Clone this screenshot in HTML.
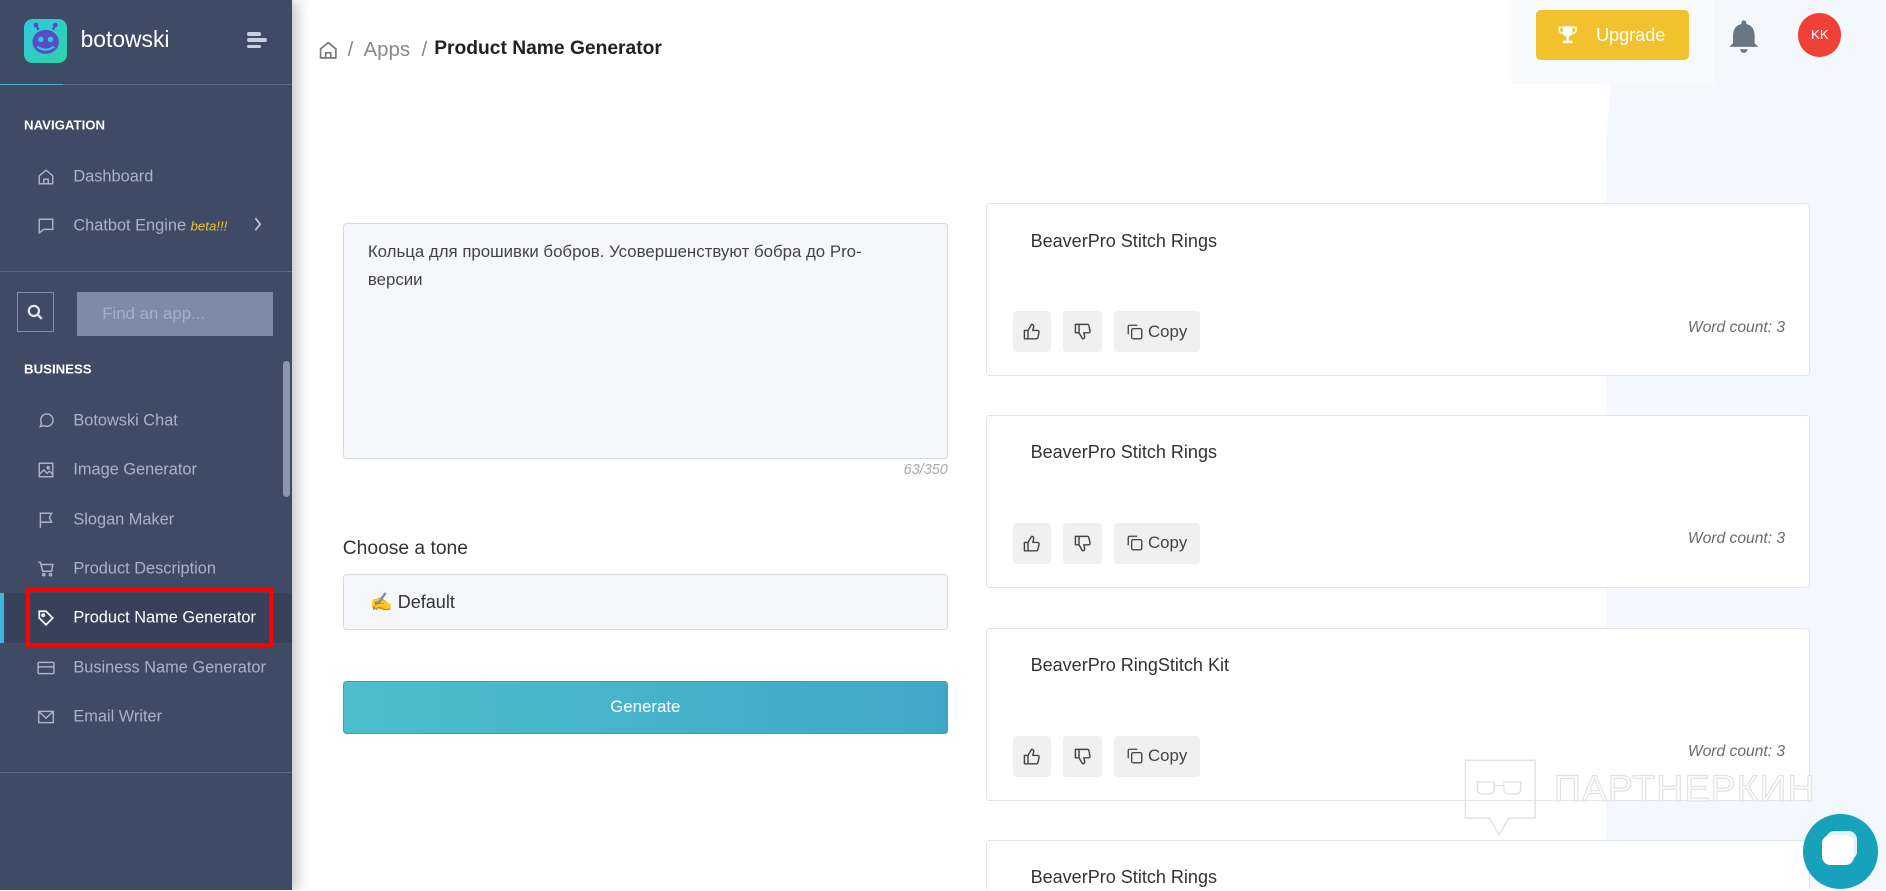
<!DOCTYPE html>
<html><head><meta charset="utf-8">
<style>
html,body{margin:0;padding:0;overflow:hidden;width:1886px;height:891px}
body{position:relative;background:#fff;font-family:"Liberation Sans","Noto Sans CJK SC",sans-serif}
#z{zoom:1.2028;width:1568px;height:740px;position:relative;overflow:hidden}
.a{position:absolute}
.sb{left:0;top:0;width:243px;height:741px;background:#3f4b64;box-shadow:4px 0 12px rgba(0,0,0,.25);z-index:2}
.nav{position:absolute;left:61px;font-size:13.6px;color:#a9b3c7;transform:translateY(-50%);white-space:nowrap}
.ic{position:absolute;left:31px;width:15px;height:15px;transform:translateY(-50%)}
.lbl{position:absolute;left:20px;font-size:11px;font-weight:bold;color:#fff;transform:translateY(-50%)}
.card{position:absolute;left:820px;width:685px;height:144px;background:#fff;border:1px solid #e2e5ea;border-radius:3px;box-sizing:border-box}
.card .t{position:absolute;left:36px;top:22px;font-size:15px;color:#333}
.btn{position:absolute;top:89px;height:34px;background:#f0f0f0;border-radius:3px;display:flex;align-items:center;justify-content:center;font-size:14px;color:#444}
.wc{position:absolute;right:20px;top:95px;font-size:13px;font-style:italic;color:#6b6b6b}
</style></head><body><div id="z">
<div class="a" style="left:1335px;top:-60px;width:400px;height:900px;background:#f4f7fb;border-top-left-radius:70px 200px"></div>
<div class="a" style="left:1256px;top:0;width:170px;height:70px;background:#f8fafc"></div>

<div class="a sb">
 <div class="a" style="left:20px;top:16px;width:36px;height:36px;border-radius:7px;background:linear-gradient(135deg,#2fc9e0,#2ed3a7)">
  <svg width="36" height="36" viewBox="0 0 36 36"><line x1="12" y1="9" x2="10" y2="5" stroke="#5a4bc7" stroke-width="2"/><line x1="24" y1="9" x2="26" y2="5" stroke="#5a4bc7" stroke-width="2"/><circle cx="10" cy="5" r="2" fill="#5a4bc7"/><circle cx="26" cy="5" r="2" fill="#5a4bc7"/><ellipse cx="18" cy="19" rx="11" ry="10" fill="#5a4bc7"/><circle cx="14" cy="17" r="2.3" fill="#2fc9e0"/><circle cx="22" cy="17" r="2.3" fill="#2fc9e0"/><path d="M11 23 Q18 28 25 23" stroke="#2fc9e0" stroke-width="1.8" fill="none"/></svg>
 </div>
 <div class="a" style="left:67px;top:22px;font-size:19px;color:#fff">botowski</div>
 <div class="a" style="left:205px;top:27px;width:12px;height:3px;background:#c7cfe0;border-radius:2px"></div>
 <div class="a" style="left:205px;top:32px;width:17px;height:3px;background:#c7cfe0;border-radius:2px"></div>
 <div class="a" style="left:205px;top:37px;width:12px;height:3px;background:#c7cfe0;border-radius:2px"></div>
 <div class="a" style="left:0;top:70px;width:243px;height:1px;background:#5a6780"></div>
 <div class="a" style="left:0;top:70px;width:52px;height:1px;background:#3fb6cc"></div>
 <div class="lbl" style="top:104px">NAVIGATION</div>
 <svg class="ic" style="top:147px" viewBox="0 0 16 16" fill="none" stroke="#a9b3c7" stroke-width="1.3"><path d="M2 7 8 2l6 5v7H2z M6 14v-4h4v4"/></svg>
 <div class="nav" style="top:147px">Dashboard</div>
 <svg class="ic" style="top:188px" viewBox="0 0 16 16" fill="none" stroke="#a9b3c7" stroke-width="1.3"><path d="M2 2h12v9H6l-4 3z"/></svg>
 <div class="nav" style="top:188px">Chatbot Engine <i style="font-size:11px;color:#f2c12e">beta!!!</i></div>
 <svg class="a" style="left:210px;top:180px" width="8" height="12" viewBox="0 0 8 12" fill="none" stroke="#c0c8d8" stroke-width="1.4"><path d="M2 1l4 5-4 5"/></svg>
 <div class="a" style="left:0;top:225px;width:243px;height:1px;background:#5a6780"></div>
 <div class="a" style="left:14px;top:243px;width:31px;height:33px;border:1px solid #8290ad;box-sizing:border-box"></div>
 <svg class="a" style="left:22px;top:252px" width="15" height="15" viewBox="0 0 16 16" fill="none" stroke="#dfe4ee" stroke-width="2"><circle cx="7" cy="7" r="4.5"/><path d="M10.5 10.5 14 14"/></svg>
 <div class="a" style="left:64px;top:243px;width:163px;height:36px;background:#7d8aa8;color:#a5b0c8;font-size:14px;line-height:36px;padding-left:21px;box-sizing:border-box">Find an app...</div>
 <div class="lbl" style="top:307px">BUSINESS</div>
 <div class="a" style="left:235px;top:300px;width:6px;height:113px;background:#8c96ad;border-radius:3px"></div>
 <svg class="ic" style="top:350px" viewBox="0 0 16 16" fill="none" stroke="#a9b3c7" stroke-width="1.3"><path d="M3 13l1-3a5.5 5.5 0 1 1 2 2z"/></svg>
 <div class="nav" style="top:350px">Botowski Chat</div>
 <svg class="ic" style="top:391px" viewBox="0 0 16 16" fill="none" stroke="#a9b3c7" stroke-width="1.3"><rect x="2" y="2" width="12" height="12"/><path d="M2 12l4-4 3 3 2-2 3 3"/><circle cx="10" cy="6" r="1"/></svg>
 <div class="nav" style="top:391px">Image Generator</div>
 <svg class="ic" style="top:432px" viewBox="0 0 16 16" fill="none" stroke="#a9b3c7" stroke-width="1.3"><path d="M3 15V2h10l-2 4 2 4H3"/></svg>
 <div class="nav" style="top:432px">Slogan Maker</div>
 <svg class="ic" style="top:473px" viewBox="0 0 16 16" fill="none" stroke="#a9b3c7" stroke-width="1.3"><path d="M1 2h2l2 8h8l1-6H4"/><circle cx="6" cy="13" r="1"/><circle cx="12" cy="13" r="1"/></svg>
 <div class="nav" style="top:473px">Product Description</div>
 <div class="a" style="left:0;top:493px;width:243px;height:42px;background:#37425a"></div>
 <div class="a" style="left:0;top:493px;width:3px;height:42px;background:#3fb6dc"></div>
 <svg class="ic" style="top:514px" viewBox="0 0 16 16" fill="none" stroke="#fff" stroke-width="1.5"><path d="M2 2h6l6 6-6 6-6-6z"/><circle cx="5.5" cy="5.5" r="1"/></svg>
 <div class="nav" style="top:514px;color:#fff">Product Name Generator</div>
 <div class="a" style="left:22px;top:489px;width:205px;height:49px;border:4px solid #f00;box-sizing:border-box"></div>
 <svg class="ic" style="top:555px" viewBox="0 0 16 16" fill="none" stroke="#a9b3c7" stroke-width="1.3"><rect x="1" y="3" width="14" height="10" rx="1"/><path d="M1 7h14"/></svg>
 <div class="nav" style="top:555px">Business Name Generator</div>
 <svg class="ic" style="top:596px" viewBox="0 0 16 16" fill="none" stroke="#a9b3c7" stroke-width="1.3"><rect x="1.5" y="3" width="13" height="10"/><path d="M1.5 3 8 9l6.5-6"/></svg>
 <div class="nav" style="top:596px">Email Writer</div>
 <div class="a" style="left:0;top:642px;width:243px;height:1px;background:#5a6780"></div>
</div>

<svg class="a" style="left:264px;top:33px" width="17" height="17" viewBox="0 0 16 16" fill="none" stroke="#777" stroke-width="1.3"><path d="M2 7 8 2l6 5v7H2z M6 14v-4h4v4"/></svg>
<div class="a" style="left:289px;top:32px;font-size:17px;color:#888">/&nbsp; Apps &nbsp;/</div>
<div class="a" style="left:361px;top:32px;font-size:16px;font-weight:bold;color:#222">Product Name Generator</div>

<div class="a" style="left:1277px;top:8px;width:127px;height:42px;background:#f2c12e;border-radius:4px;color:#fff;font-size:15px;line-height:42px">
<svg class="a" style="left:18px;top:13px" width="16" height="16" viewBox="0 0 16 16" fill="#fff"><path d="M4 1h8v5a4 4 0 0 1-8 0z"/><path d="M4 2H1v2a3 3 0 0 0 3 3M12 2h3v2a3 3 0 0 1-3 3" fill="none" stroke="#fff" stroke-width="1.3"/><rect x="7" y="9" width="2" height="4"/><rect x="4" y="13" width="8" height="2"/></svg>
<span style="position:absolute;left:50px">Upgrade</span></div>
<svg class="a" style="left:1436px;top:15px" width="28" height="30" viewBox="0 0 28 30"><path d="M14 2a2 2 0 0 1 2 2v1c5 1 7 5 7 10v6l3 3H2l3-3v-6c0-5 2-9 7-10V4a2 2 0 0 1 2-2z" fill="#6c7682"/><path d="M11 26a3 3 0 0 0 6 0z" fill="#6c7682"/></svg>
<div class="a" style="left:1495px;top:11px;width:36px;height:36px;border-radius:50%;background:#ef4136;color:#fff;font-size:11px;line-height:36px;text-align:center">KK</div>

<div class="a" style="left:285px;top:185px;width:503px;height:197px;background:#f5f7fa;border:1px solid #d5d9e0;border-radius:3px;box-sizing:border-box;padding:12px 50px 12px 20px;font-size:14px;line-height:23px;color:#444">Кольца для прошивки бобров. Усовершенствуют бобра до Pro-версии</div>
<div class="a" style="left:700px;top:384px;width:88px;text-align:right;font-size:12px;font-style:italic;color:#aaa">63/350</div>
<div class="a" style="left:285px;top:447px;font-size:16px;color:#333">Choose a tone</div>
<div class="a" style="left:285px;top:477px;width:503px;height:47px;background:#f5f7fa;border:1px solid #d5d9e0;border-radius:3px;box-sizing:border-box;padding-left:22px;line-height:45px;font-size:15px;color:#333">✍️ Default</div>
<div class="a" style="left:285px;top:566px;width:503px;height:44px;background:linear-gradient(90deg,#4dbecb,#3fa8c8);border:1px solid #3c9fb8;border-radius:3px;box-sizing:border-box;color:#fff;font-size:14px;text-align:center;line-height:42px">Generate</div>

<svg width="0" height="0" style="position:absolute"><defs>
<symbol id="up" viewBox="0 0 16 16"><path d="M2 7h3v7H2z M5 7l3-5c1.5 0 2 1 1.6 2.5L9 7h4a1.2 1.2 0 0 1 1.2 1.4l-1 4.6a1.3 1.3 0 0 1-1.3 1H5" fill="none" stroke="#444" stroke-width="1.2" stroke-linejoin="round"/></symbol>
<symbol id="cp" viewBox="0 0 16 16"><path d="M2 10V3a1 1 0 0 1 1-1h7" fill="none" stroke="#444" stroke-width="1.2"/><rect x="5" y="5" width="9" height="9" rx="1.5" fill="none" stroke="#444" stroke-width="1.2"/></symbol>
</defs></svg>

<div class="card" style="top:169px"><div class="t">BeaverPro Stitch Rings</div><div class="btn" style="left:21px;width:32px"><svg width="16" height="16"><use href="#up"/></svg></div><div class="btn" style="left:63px;width:32px"><svg width="16" height="16" style="transform:rotate(180deg) scaleX(-1)"><use href="#up"/></svg></div><div class="btn" style="left:105px;width:72px"><svg width="15" height="15" style="margin-right:3px"><use href="#cp"/></svg>Copy</div><div class="wc">Word count: 3</div></div>
<div class="card" style="top:345px"><div class="t">BeaverPro Stitch Rings</div><div class="btn" style="left:21px;width:32px"><svg width="16" height="16"><use href="#up"/></svg></div><div class="btn" style="left:63px;width:32px"><svg width="16" height="16" style="transform:rotate(180deg) scaleX(-1)"><use href="#up"/></svg></div><div class="btn" style="left:105px;width:72px"><svg width="15" height="15" style="margin-right:3px"><use href="#cp"/></svg>Copy</div><div class="wc">Word count: 3</div></div>
<div class="card" style="top:522px"><div class="t">BeaverPro RingStitch Kit</div><div class="btn" style="left:21px;width:32px"><svg width="16" height="16"><use href="#up"/></svg></div><div class="btn" style="left:63px;width:32px"><svg width="16" height="16" style="transform:rotate(180deg) scaleX(-1)"><use href="#up"/></svg></div><div class="btn" style="left:105px;width:72px"><svg width="15" height="15" style="margin-right:3px"><use href="#cp"/></svg>Copy</div><div class="wc">Word count: 3</div></div>
<div class="card" style="top:698px;height:43px;border-bottom:none"><div class="t">BeaverPro Stitch Rings</div></div>

<svg class="a" style="left:1216px;top:630px" width="62" height="68" viewBox="0 0 62 68" fill="none" stroke="#e2e2e2" stroke-width="1.2"><path d="M2 2h58v48H38l-8 14-8-14H2z"/><path d="M12 20h14v6a4 4 0 0 1-4 4h-6a4 4 0 0 1-4-4zM34 20h14v6a4 4 0 0 1-4 4h-6a4 4 0 0 1-4-4zM26 23h8"/></svg>
<div class="a" style="left:1292px;top:638px;font-size:31px;color:#fff;-webkit-text-stroke:1px #e2e2e2;letter-spacing:1px">ПАРТНЕРКИН</div>
<div class="a" style="left:1499px;top:677px;width:62px;height:62px;border-radius:50%;background:#17a2bb"></div>
<div class="a" style="left:1518px;top:691px;width:26px;height:24px;border-radius:7px;background:#e0f4f7"></div>
<div class="a" style="left:1515px;top:694px;width:26px;height:25px;border-radius:7px;background:#fff"></div>
</div></body></html>
